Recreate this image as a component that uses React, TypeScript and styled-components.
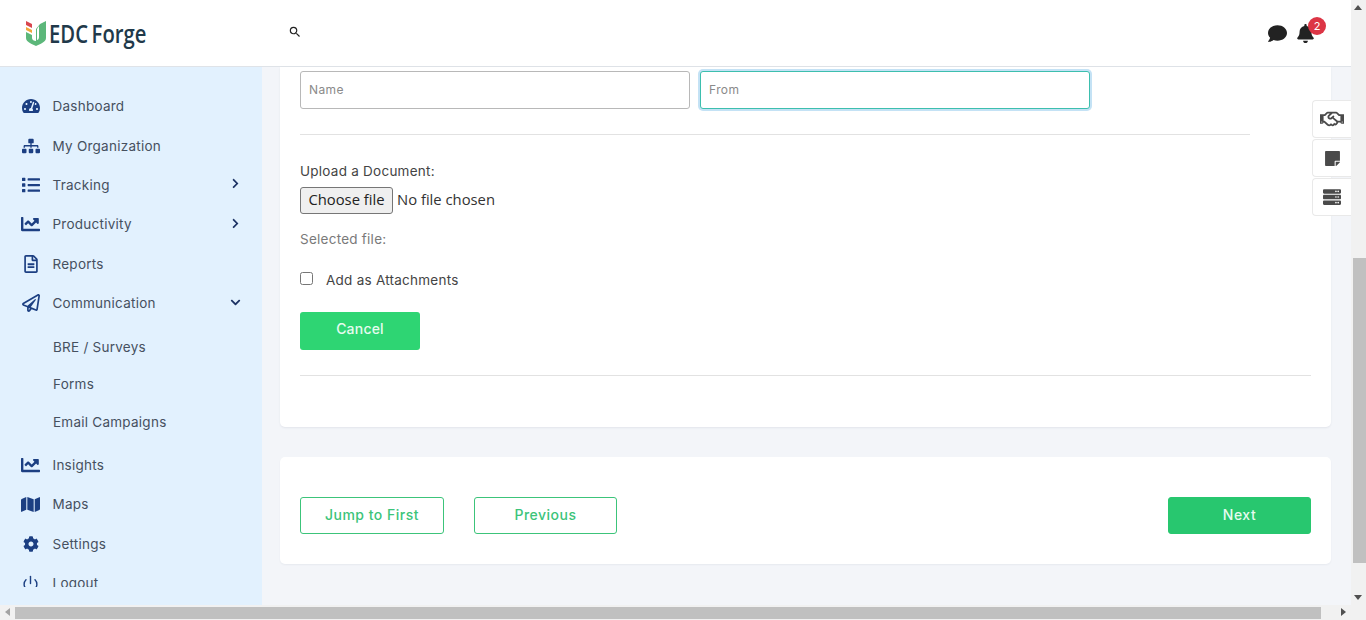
import React from "react";
import styled, { createGlobalStyle } from "styled-components";
import {
  FaBell,
  FaChartLine,
  FaChevronDown,
  FaChevronRight,
  FaCog,
  FaComment,
  FaList,
  FaMap,
  FaRegFileAlt,
  FaRegHandshake,
  FaRegPaperPlane,
  FaServer,
  FaSitemap,
  FaStickyNote,
  FaTachometerAlt,
} from "react-icons/fa";
import { FiPower } from "react-icons/fi";
import { MdSearch } from "react-icons/md";

const font = `"Inter", "Open Sans", "Liberation Sans", sans-serif`;

const GlobalStyle = createGlobalStyle`
  html, body {
    margin: 0;
    padding: 0;
    overflow: hidden;
  }
  * {
    box-sizing: border-box;
  }
  body {
    font-family: ${font};
  }
`;

const Page = styled.div`
  position: relative;
  width: 1366px;
  height: 620px;
  overflow: hidden;
  background: #f1f1f1;
  display: flex;
  flex-direction: column;
`;

const Upper = styled.div`
  height: 605px;
  display: flex;
`;

const Viewport = styled.div`
  width: 1351px;
  display: flex;
  flex-direction: column;
  background: #f3f5f9;
`;

const Header = styled.header`
  height: 67px;
  flex: none;
  background: #fff;
  border-bottom: 1px solid #dfe3e8;
  display: flex;
  align-items: center;
  padding: 0 24px 0 26px;
`;

const Logo = styled.div`
  width: 262px;
  display: flex;
  align-items: center;
  gap: 3px;
`;

const LogoText = styled.span`
  font-family: "Open Sans", sans-serif;
  font-size: 25px;
  font-weight: 600;
  word-spacing: -2px;
  color: #21394a;
  line-height: 1;
  transform: scaleX(0.81);
  transform-origin: left center;
  white-space: nowrap;
`;

const SearchIcon = styled(MdSearch)`
  font-size: 14px;
  color: #222;
  margin-top: -2px;
`;

const HeaderTools = styled.div`
  margin-left: auto;
  display: flex;
  align-items: center;
  gap: 9px;
  color: #222;
  font-size: 19px;
  padding-right: 12px;
`;

const BellWrap = styled.div`
  position: relative;
  display: flex;
`;

const Badge = styled.span`
  position: absolute;
  top: -7px;
  right: -11px;
  width: 18px;
  height: 18px;
  border-radius: 50%;
  background: #dc3545;
  color: #fff;
  font-size: 11px;
  text-align: center;
  line-height: 18px;
`;

const Body = styled.div`
  flex: 1;
  display: flex;
  min-height: 0;
`;

const Sidebar = styled.aside`
  width: 262px;
  flex: none;
  background: #e2f1fe;
  padding-bottom: 15px;
`;

const Nav = styled.nav`
  height: 520px;
  overflow: hidden;
  padding-top: 19.5px;
`;

const NavItem = styled.div`
  height: 39.4px;
  display: flex;
  align-items: center;
  padding-left: 21px;
  font-size: 13.5px;
  letter-spacing: 0.25px;
  color: #46505f;
`;

const NavIcon = styled.span<{ $size: number }>`
  width: 19px;
  margin-right: 12.5px;
  flex: none;
  display: flex;
  justify-content: center;
  font-size: ${(p) => p.$size}px;
  color: #1c3f82;
`;

const NavArrow = styled.span`
  margin-left: auto;
  margin-right: 21px;
  display: flex;
  font-size: 11px;
  color: #1c3264;
  margin-top: -2px;
`;

const SubList = styled.div`
  padding: 5.4px 0 4.5px;
`;

const SubItem = styled.div`
  height: 37.5px;
  display: flex;
  align-items: center;
  padding-left: 53px;
  font-size: 13.5px;
  letter-spacing: 0.25px;
  color: #46505f;
`;

const Content = styled.main`
  flex: 1;
  padding: 0 20px 0 18px;
  display: flex;
  flex-direction: column;
  gap: 30px;
`;

const FormCard = styled.section`
  height: 360px;
  background: #fff;
  border-radius: 0 0 5px 5px;
  box-shadow: 0 1px 2px rgba(40, 50, 80, 0.08);
  padding: 4px 20px 0;
`;

const NameRow = styled.div`
  display: flex;
  gap: 10px;
`;

const TextField = styled.input<{ $focused?: boolean }>`
  width: 390px;
  height: 38px;
  padding: 0 8px 2px;
  font-family: ${font};
  font-size: 12px;
  letter-spacing: 0.4px;
  background: #fff;
  border-radius: 3px;
  outline: none;
  border: 1px solid ${(p) => (p.$focused ? "#3dbfae" : "#b8b8b8")};
  box-shadow: ${(p) => (p.$focused ? "0 0 0 2px #c4e2f5" : "none")};
  &::placeholder {
    color: #8a8a8a;
  }
`;

const Rule = styled.hr<{ $width: number; $top: number }>`
  width: ${(p) => p.$width}px;
  height: 1px;
  margin: ${(p) => p.$top}px 0 0;
  border: 0;
  background: #e2e2e2;
`;

const UploadLabel = styled.label`
  display: block;
  margin-top: 28px;
  height: 16px;
  line-height: 16px;
  font-size: 13.5px;
  letter-spacing: 0.25px;
  color: #444;
`;

const FilePicker = styled.div`
  margin-top: 8px;
  height: 27px;
  display: flex;
  align-items: center;
  gap: 4px;
  font-family: "Open Sans", sans-serif;
  font-size: 14.8px;
  color: #333;
`;

const FileButton = styled.button`
  height: 27px;
  width: 93px;
  padding: 0 0 4px;
  font: inherit;
  color: #222;
  background: #efefef;
  border: 1px solid #767676;
  border-radius: 3px;
`;

const FileStatus = styled.span`
  margin-bottom: 4px;
`;

const SelectedFile = styled.div`
  margin-top: 17px;
  height: 17px;
  line-height: 17px;
  font-size: 13.5px;
  letter-spacing: 0.25px;
  color: #7a7a7a;
`;

const CheckRow = styled.label`
  margin-top: 24px;
  height: 16px;
  display: flex;
  align-items: center;
  gap: 13px;
  font-size: 13.5px;
  letter-spacing: 0.25px;
  color: #444;
`;

const Check = styled.input`
  width: 13px;
  height: 13px;
  margin: -3px 0 0;
`;

const CancelButton = styled.button`
  display: block;
  margin-top: 24px;
  width: 120px;
  height: 38px;
  border: 0;
  border-radius: 3px;
  background: #2ed573;
  color: #e6fbef;
  font-family: ${font};
  font-size: 14px;
  letter-spacing: 0.2px;
  font-weight: 500;
  padding: 0 0 6px;
`;

const Footer = styled.section`
  height: 107px;
  background: #fff;
  border-radius: 5px;
  box-shadow: 0 1px 2px rgba(40, 50, 80, 0.06);
  padding: 40px 20px 0;
  display: flex;
  align-items: flex-start;
  gap: 30px;
`;

const PagerButton = styled.button<{ $solid?: boolean; $width: number }>`
  width: ${(p) => p.$width}px;
  height: 37px;
  padding: 0 0 2px;
  border-radius: 3px;
  border: 1px solid ${(p) => (p.$solid ? "#28c76f" : "#3cc47a")};
  background: ${(p) => (p.$solid ? "#28c76f" : "#fff")};
  color: ${(p) => (p.$solid ? "#e6fbef" : "#3cc47a")};
  font-family: ${font};
  font-size: 14px;
  letter-spacing: 0.5px;
  font-weight: 500;
  ${(p) => (p.$solid ? "margin-left: auto;" : "")}
`;

const SideTabs = styled.div`
  position: absolute;
  top: 100px;
  left: 1312px;
  width: 39px;
  display: flex;
  flex-direction: column;
  gap: 1px;
`;

const SideTab = styled.div<{ $size: number }>`
  height: 38px;
  background: #fff;
  border: 1px solid #e9e9e9;
  border-right: 0;
  border-radius: 4px 0 0 4px;
  display: flex;
  align-items: center;
  justify-content: center;
  color: #4a4a4a;
  font-size: ${(p) => p.$size}px;
`;

const VBar = styled.div`
  width: 15px;
  background: #f1f1f1;
  display: flex;
  flex-direction: column;
  align-items: center;
  padding-top: 258px;
  position: relative;
`;

const VThumb = styled.div`
  width: 13px;
  height: 305px;
  margin-left: 2px;
  background: #c0c0c0;
`;

const Arrow = styled.span<{ $dir: "up" | "down" | "left" | "right" }>`
  position: absolute;
  width: 0;
  height: 0;
  border: 4px solid transparent;
  ${(p) =>
    p.$dir === "up" &&
    "border-top: 0; border-bottom: 5px solid #505050; top: 5px; left: 3px;"}
  ${(p) =>
    p.$dir === "down" &&
    "border-bottom: 0; border-top: 5px solid #505050; bottom: 5px; left: 3px;"}
  ${(p) =>
    p.$dir === "left" &&
    "border-left: 0; border-right: 5px solid #a3a3a3; left: 5px; top: 3px;"}
  ${(p) =>
    p.$dir === "right" &&
    "border-right: 0; border-left: 5px solid #505050; right: 20px; top: 3px;"}
`;

const HBar = styled.div`
  height: 15px;
  position: relative;
  background: #f1f1f1;
  padding: 2px 45px 1px 15px;
`;

const HThumb = styled.div`
  height: 12px;
  background: #c0c0c0;
`;

const LogoMark = () => (
  <svg width="20" height="25" viewBox="0 0 20 25">
    <path d="M0 0 L6 3 V7 L0 4 Z" fill="#d8474f" />
    <path d="M0 6 L6 9 V12 L0 9 Z" fill="#f0a73a" />
    <path
      d="M0 11 L6 14 V17 C6 19 8 20 10 20 V8 L14 3 L20 0 V17 C20 21 14 23 10 25 C6 23 0 21 0 17 Z"
      fill="#5cb77a"
    />
    <path d="M11 8 L13 5 V16 C13 18 12 19 11 19 Z" fill="#fff" />
  </svg>
);

type NavEntry = {
  label: string;
  icon: React.ReactNode;
  size: number;
  arrow?: "right" | "down";
};

const mainItems: NavEntry[] = [
  { label: "Dashboard", icon: <FaTachometerAlt />, size: 18 },
  { label: "My Organization", icon: <FaSitemap />, size: 18 },
  { label: "Tracking", icon: <FaList />, size: 18, arrow: "right" },
  { label: "Productivity", icon: <FaChartLine />, size: 20, arrow: "right" },
  { label: "Reports", icon: <FaRegFileAlt />, size: 18 },
  { label: "Communication", icon: <FaRegPaperPlane />, size: 18, arrow: "down" },
];

const subItems = ["BRE / Surveys", "Forms", "Email Campaigns"];

const lowerItems: NavEntry[] = [
  { label: "Insights", icon: <FaChartLine />, size: 20 },
  { label: "Maps", icon: <FaMap />, size: 19 },
  { label: "Settings", icon: <FaCog />, size: 16 },
  { label: "Logout", icon: <FiPower />, size: 17 },
];

const renderItem = (item: NavEntry) => (
  <NavItem key={item.label}>
    <NavIcon $size={item.size}>{item.icon}</NavIcon>
    {item.label}
    {item.arrow && (
      <NavArrow>
        {item.arrow === "right" ? <FaChevronRight /> : <FaChevronDown />}
      </NavArrow>
    )}
  </NavItem>
);

const App = () => {
  return (
    <Page>
      <GlobalStyle />
      <Upper>
        <Viewport>
          <Header>
            <Logo>
              <LogoMark />
              <LogoText>EDC Forge</LogoText>
            </Logo>
            <SearchIcon />
            <HeaderTools>
              <FaComment />
              <BellWrap>
                <FaBell />
                <Badge>2</Badge>
              </BellWrap>
            </HeaderTools>
          </Header>
          <Body>
            <Sidebar>
              <Nav>
                {mainItems.map(renderItem)}
                <SubList>
                  {subItems.map((label) => (
                    <SubItem key={label}>{label}</SubItem>
                  ))}
                </SubList>
                {lowerItems.map(renderItem)}
              </Nav>
            </Sidebar>
            <Content>
              <FormCard>
                <NameRow>
                  <TextField placeholder="Name" />
                  <TextField placeholder="From" $focused />
                </NameRow>
                <Rule $width={950} $top={25} />
                <UploadLabel>Upload a Document:</UploadLabel>
                <FilePicker>
                  <FileButton>Choose file</FileButton>
                  <FileStatus>No file chosen</FileStatus>
                </FilePicker>
                <SelectedFile>Selected file:</SelectedFile>
                <CheckRow>
                  <Check type="checkbox" />
                  Add as Attachments
                </CheckRow>
                <CancelButton>Cancel</CancelButton>
                <Rule $width={1011} $top={25} />
              </FormCard>
              <Footer>
                <PagerButton $width={144}>Jump to First</PagerButton>
                <PagerButton $width={143}>Previous</PagerButton>
                <PagerButton $width={143} $solid>
                  Next
                </PagerButton>
              </Footer>
            </Content>
          </Body>
        </Viewport>
        <VBar>
          <Arrow $dir="up" />
          <VThumb />
          <Arrow $dir="down" />
        </VBar>
      </Upper>
      <HBar>
        <Arrow $dir="left" />
        <HThumb />
        <Arrow $dir="right" />
      </HBar>
      <SideTabs>
        <SideTab $size={24}>
          <FaRegHandshake />
        </SideTab>
        <SideTab $size={17}>
          <FaStickyNote />
        </SideTab>
        <SideTab $size={18}>
          <FaServer />
        </SideTab>
      </SideTabs>
    </Page>
  );
};

export default App;
